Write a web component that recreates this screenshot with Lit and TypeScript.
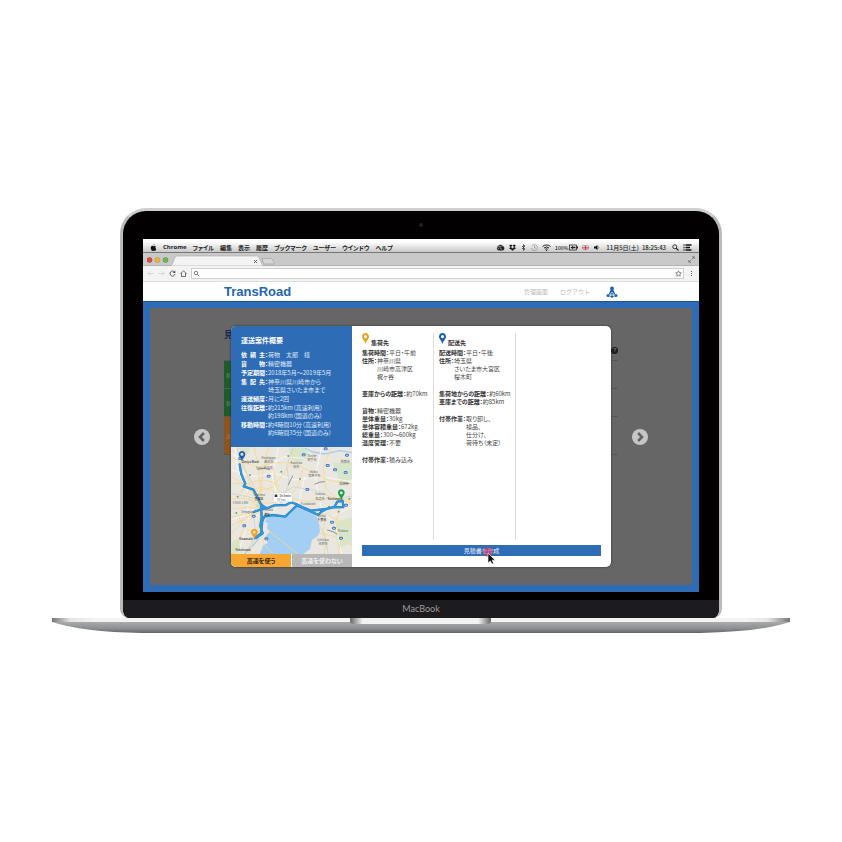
import { LitElement, html, css, svg } from "lit";
import { customElement } from "lit/decorators.js";

const pin = (color: string, x = 0, y = 0) => svg`
  <path transform="translate(${x} ${y})" fill=${color} fill-rule="evenodd"
    d="M10 0C4.500 0 0 4.500 0 10c0 7 7 11 10 21c3-10 10-14 10-21C20 4.500 15.500 0 10 0zM10 5.500a4.500 4.500 0 1 1 0 9a4.500 4.500 0 0 1 0-9z"/>`;

const arrow = (left: boolean) => html`
  <svg viewBox="0 0 16 16" aria-hidden="true">
    <circle cx="8" cy="8" r="8" fill="#c6c6c6"/>
    <path d=${left ? "M9.900 4L6 8l3.900 4" : "M6.100 4L10 8l-3.900 4"} fill="none" stroke="#636363" stroke-width="2.600"/>
  </svg>`;

const ROUTE = "M26 55L31 85l12 28-5 8 29 10 9 16 12 25 9 9 11 6 22-9 35-1 15-8 15 5 20 10 25 10 45-5 25-6 9-16 16-2 2 18-28 1"
  + "M72 276l18-14 4-37 6-13 25-5 38 5 17-17 18-17 27 12 37 17 8-9 15-8M90 174l2 41-4 25 7 22-20 14M68 198l22-8 16-4";

@customElement("route-map")
export class RouteMap extends LitElement {
  static styles = css`
    :host { display: block; height: 107px; overflow: hidden; }
    svg { display: block; width: 100%; height: 100%; }
    text { font: 9px "Noto Sans CJK JP", "Noto Sans", sans-serif; fill: #666; text-anchor: middle; }
    .city { fill: #333; font-weight: 500; }
  `;

  private places: [number, number, string, string][] = [
    [58, 50, "Omiya Ward", "city"],
    [113, 40, "Koshigaya", ""], [113, 52, "越谷市", ""],
    [243, 32, "Toride", ""], [243, 44, "取手市", ""],
    [196, 54, "Kashiwa", ""], [196, 67, "柏市", ""],
    [100, 70, "Soka 草加市", ""],
    [248, 80, "Abiko", ""], [250, 92, "我孫子市", ""],
    [343, 52, "稲敷市", ""],
    [338, 118, "成田市", ""],
    [267, 148, "Sakura", ""], [267, 161, "佐倉市", ""],
    [29, 175, "CHUO LINE", ""],
    [84, 151, "Toshima", ""], [84, 163, "豊島区", "city"],
    [50, 201, "Setagaya", ""],
    [112, 196, "Minato", ""], [108, 209, "港区", "city"],
    [232, 176, "Funabashi", ""],
    [272, 213, "Chiba", ""], [272, 226, "千葉市", "city"],
    [312, 162, "Yachimata", "city"],
    [45, 283, "Kawasaki", "city"],
    [36, 315, "Yokohama", "city"],
    [276, 284, "Ichihara", ""], [276, 297, "市原市", ""],
    [336, 258, "Mobara", ""],
  ];

  render() {
    return html`
      <svg viewBox="0 3 363 321" preserveAspectRatio="xMidYMid slice" role="img" aria-label="ルート地図">
        <rect y="3" width="363" height="321" fill="#e9e7df"/>
        <path fill="#d7e6cb" d="M172 5l50 0 15 26-34 20-24-15zM305 50l58-2v50l-36 14zM307 232l56-20v80l-42 14zM0 292l20-14 14 46H0zM20 5h40l-14 26z"/>
        <path fill="#a4cff4" d="M108 213l20-5 36 5 18-18 16-16 24 14 34 16 8 24 3 24-8 14-16 10-6 28-22 16H86l10-24-4-30 4-34z"/>
        <path fill="#e9e7df" d="M96 224l14 8-2 16 10 8-14 14 6 22-18 8-8-10 8-40z"/>
        <path fill="none" stroke="#a4cff4" stroke-width="4" d="M222 6l24 12 35 6 45-10 37 6M78 176l12 14 4 30M40 324l30-30 14-16"/>
        <g fill="none" stroke="#fff" stroke-width="2">
          <path d="M0 22l60 35 50 5 50-30 60 5M0 72l70 20 60-10 60 20 80-10 93 15M12 3l8 70 30 60 2 90-30 100M142 3l-18 90 20 80-20 30M272 3l-20 90 20 100 40 40 20 91M0 222l60-20 30 10M222 92l-20 80M362 182l-60 30"/>
        </g>
        <g fill="none" stroke="#c8cdd2" stroke-width="2">
          <path d="M17 3l20 60 28 50 17 50-14 45 6 60-30 55M187 3l-20 60 8 50-28 60M363 150l-50 10-50-24-76-14-65 40"/>
          <path d="M0 142l50 10 35 12M292 324l-12-60-20-34"/>
        </g>
        <g fill="none" stroke="#f7d98e" stroke-width="2.500">
          <path d="M0 34l42 18 42 10 46-12 60 0 50 28 55 25 68 12"/>
          <path d="M0 112l36 2 42 22 45-12 30-35 26-34 16-52"/>
          <path d="M0 159l42-2 38 14 38 0 60-14 52 10 70-12 63 16"/>
          <path d="M0 188l50-4 40 2M0 213l50-10 45-12M0 240l42-22 48-28M0 266l44-50 44-28M6 324l38-90 46-44M52 323l26-60 12-70"/>
          <path d="M32 3l8 60 16 50 32 70M70 3l12 60 6 66 2 60M112 3l-18 80-4 50 2 56M0 90l60 40 28 56"/>
          <path d="M127 62l8 62 28 32 38 18 34 18 48 12 42 20 60 30M217 65l-16 54-28 38M302 4l-26 60 8 62 30 30 49 8"/>
          <path d="M283 220l-8 40 12 30-8 34M326 186l-12 44 16 50-8 44M264 262l40 8 59 28"/>
          <path d="M48 145c10-24 66-26 85-4 10 20 2 38-18 44-26 5-56-8-67-40z"/>
          <path d="M30 142c18-46 90-50 115-18M24 214c10 30 40 52 62 42M110 252l90 72M86 256l14 40 26 28"/>
        </g>
        <g fill="none" stroke="#8b8d91" stroke-width="3" stroke-linecap="round">
          <path d="M172 116q6-14 13-26M252 114q14-8 28-7M80 70q20-6 36 0M290 252q18 4 28 12M338 112l16 0"/>
        </g>
        <g fill="#4579c8">
          ${[[28, 38], [218, 27], [284, 9], [290, 59], [113, 91], [312, 72], [229, 131], [348, 28], [303, 229], [344, 80], [330, 277], [40, 240], [309, 247], [68, 211], [106, 279], [345, 178]].map(([x, y]) => svg`<rect x=${x - 6} y=${y - 5} width="12" height="9" rx="4"/><path d="M${x - 3} ${y}h6" stroke="#fff" stroke-width="2"/>`)}
        </g>
        <g fill="#6aa375">
          ${[[57, 87], [151, 77], [172, 30], [207, 99], [323, 197], [355, 158], [16, 201], [20, 152], [294, 182]].map(([x, y]) => svg`<circle cx=${x} cy=${y} r="3"/>`)}
        </g>
        <g fill="none" stroke-linejoin="round" stroke-linecap="round">
          <path d=${ROUTE} stroke="#2b7fc0" stroke-width="7"/>
          <path d=${ROUTE} stroke="#2f97dc" stroke-width="5"/>
        </g>
        ${this.places.map(([x, y, label, cls]) => svg`<text class=${cls} x=${x} y=${y}>${label}</text>`)}
        <path fill="#fff" stroke="#c9c9c9" d="M127 140h56v27h-43l-6 7v-7h-7z"/>
        <path fill="#333" d="M131 147q4-5 8 0v6h-8z"/>
        <text class="city" x="162" y="154">1h 5min</text>
        <text x="151" y="164">57 km</text>
        ${pin("#1f60b4", 23, 15)}
        ${pin("#17a045", 321, 130)}
        ${pin("#f3a11c", 60, 248)}
      </svg>`;
  }
}

@customElement("quote-dialog")
export class QuoteDialog extends LitElement {
  static styles = css`
    :host { display: block; flex: 0 1 380px; min-width: 0; }
    * { box-sizing: border-box; margin: 0; }
    .dialog {
      display: grid; grid-template-columns: 121px 1fr; height: 100%;
      background: #fff; border-radius: 5px; overflow: hidden;
      font-size: 6px; line-height: 8px; color: #444;
      box-shadow: 0 0 2px #222;
    }
    .summary { display: flex; flex-direction: column; }
    .facts { background: #2f6cb6; color: #dfeafa; padding: 9px 0 10px 10px; }
    h2 { font-size: 7px; line-height: 10px; color: #fff; margin-bottom: 6px; }
    .facts dl { display: grid; gap: 1px; }
    .fact { display: flex; }
    .fact dt { display: flex; font-weight: 700; color: #fff; }
    .key { width: 24px; text-align: justify; text-align-last: justify; }
    .routes { display: grid; grid-template-columns: 1fr 1fr; gap: 1px; background: #fff; }
    button { border: 0; padding: 0; font: inherit; cursor: pointer; }
    .routes button { height: 13px; font-weight: 700; }
    .use { background: #f5a732; color: #33220a; }
    .avoid { background: #b7b7b7; color: #f1f1f1; }
    .detail { display: flex; flex-direction: column; padding: 7px 10px 11px; gap: 5px; min-width: 0; }
    .stops { flex: 1; display: grid; grid-template-columns: 72px 82px 1fr; }
    .stop { border-right: 1px solid #dcdcdc; white-space: nowrap; }
    .stop + .stop { padding-left: 5px; }
    h3 { display: flex; align-items: flex-end; gap: 2px; height: 14px; font-size: 6px; line-height: 8px; color: #333; margin-bottom: 2px; }
    h3 svg { width: 7px; height: 11px; margin-bottom: 3px; }
    .group { margin-bottom: 9px; }
    .group div { display: flex; }
    .group dt { font-weight: 700; color: #333; }
    .submit { position: relative; }
    .submit button { display: block; width: 100%; height: 11px; background: #2f6cb6; color: #e3ecf8; }
    .pointer { position: absolute; left: 50%; top: 1px; width: 16px; height: 18px; }
  `;

  private facts: [string, string[]][] = [
    ["依 頼 主", ["荷物　太郎　様"]],
    ["貨 物", ["精密機器"]],
    ["予定期間", ["2018年5月〜2019年5月"]],
    ["集 配 先", ["神奈川県川崎市から", "埼玉県さいたま市まで"]],
    ["運送頻度", ["月に2回"]],
    ["往復距離", ["約215km（高速利用）", "約198km（国道のみ）"]],
    ["移動時間", ["約4時間10分（高速利用）", "約6時間35分（国道のみ）"]],
  ];

  private stops: { name: string; color: string; groups: [string, string[]][][] }[] = [
    {
      name: "集荷先", color: "#f0a020",
      groups: [
        [["集荷時間", ["平日・午前"]], ["住所", ["神奈川県", "川崎市高津区", "梶ヶ谷"]]],
        [["車庫からの距離", ["約70km"]]],
        [["貨物", ["精密機器"]], ["単体重量", ["30kg"]], ["単体容積重量", ["672kg"]], ["総重量", ["300〜600kg"]], ["温度管理", ["不要"]]],
        [["付帯作業", ["積み込み"]]],
      ],
    },
    {
      name: "配送先", color: "#1d5cad",
      groups: [
        [["配送時間", ["平日・午後"]], ["住所", ["埼玉県", "さいたま市大宮区", "桜木町"]]],
        [["集荷地からの距離", ["約60km"]], ["車庫までの距離", ["約85km"]]],
        [["付帯作業", ["取り卸し、", "検品、", "仕分け、", "荷待ち（未定）"]]],
      ],
    },
  ];

  render() {
    return html`
      <section class="dialog" role="dialog" aria-labelledby="title">
        <div class="summary">
          <div class="facts">
            <h2 id="title">運送案件概要</h2>
            <dl>${this.facts.map(([key, lines]) => html`
              <div class="fact">
                <dt><span class="key">${key}</span>：</dt>
                <dd>${lines.map((l) => html`<p>${l}</p>`)}</dd>
              </div>`)}
            </dl>
          </div>
          <route-map></route-map>
          <div class="routes">
            <button class="use">高速を使う</button>
            <button class="avoid">高速を使わない</button>
          </div>
        </div>
        <div class="detail">
          <div class="stops">
            ${this.stops.map((s) => html`
              <div class="stop">
                <h3><svg viewBox="0 0 20 31" aria-hidden="true">${pin(s.color)}</svg>${s.name}</h3>
                ${s.groups.map((g) => html`
                  <dl class="group">${g.map(([key, lines]) => html`
                    <div><dt>${key}：</dt><dd>${lines.map((l) => html`<p>${l}</p>`)}</dd></div>`)}
                  </dl>`)}
              </div>`)}
          </div>
          <div class="submit">
            <button>見積書を作成</button>
            <svg class="pointer" viewBox="0 0 16 18" aria-hidden="true">
              <circle cx="6" cy="6" r="5" fill="#d63a6a" opacity=".6"/>
              <path d="M6 7v10l2.300-2 1.700 3 1.600-.8-1.500-3h3z" fill="#111" stroke="#fff" stroke-width=".6"/>
            </svg>
          </div>
        </div>
      </section>`;
  }
}

@customElement("mac-screen")
export class MacScreen extends LitElement {
  static styles = css`
    :host { display: block; background: #fff; overflow: hidden; }
    * { box-sizing: border-box; margin: 0; }
    svg { display: block; flex: none; }
    button { display: block; border: 0; padding: 0; background: none; cursor: pointer; }
    a { color: inherit; text-decoration: none; }
    .menubar {
      display: flex; justify-content: space-between; align-items: flex-end; height: 14px; padding: 0 7px;
      background: linear-gradient(#fff 20%, #c9c9c9); border-bottom: 1px solid #777;
      font-size: 6px; line-height: 9px; color: #222; white-space: nowrap; font-weight: 500;
    }
    .menus, .status { display: flex; align-items: center; }
    .menus { gap: 6px; font-weight: 700; }
    .status { gap: 4px; }
    .app { font-family: "Open Sans", sans-serif; }
    .i7 { width: 7px; height: 7px; }
    .i9 { width: 9px; height: 7px; }
    .battery { display: flex; align-items: center; gap: 1px; font-size: 5px; }
    .clock { display: flex; gap: 3px; margin: 0 2px; }
    .tabs { display: flex; align-items: center; height: 13px; padding: 0 4px; background: #c9c9c9; border-bottom: 1px solid #b2b2b2; }
    .lights { width: 23px; height: 7px; }
    .tab { width: 106px; height: 11px; margin: 2px auto -1px 0; z-index: 1; }
    .toolbar { display: flex; align-items: center; gap: 4px; height: 15px; padding: 0 4px; background: #f3f3f3; }
    .address { flex: 1; display: flex; align-items: center; height: 11px; background: #fff; border: 1px solid #cfcfcf; padding: 0 1px; min-width: 0; }
    .address input { flex: 1; min-width: 0; height: 8px; border: 0; padding: 0 2px; background: none; outline: none; font-size: 6px; }
    .site { display: flex; align-items: center; height: 21px; padding: 0 81px; background: #fff; border-top: 1px solid #ddd; border-bottom: 1px solid #1a5498; }
    .brand { font: 700 13px/18px "Liberation Sans", sans-serif; color: #2464b3; margin-right: auto; }
    .site nav { display: flex; gap: 12px; margin-right: 16px; font-size: 6px; color: #bbb; font-feature-settings: normal; }
    .user { width: 12px; height: 12px; }
    .frame { background: #2f6cb6; padding: 6px 7px 7px; }
    .stage { display: grid; background: #666; }
    .behind, .overlay { grid-area: 1 / 1; }
    .behind { width: 394px; max-width: 100%; margin: 0 auto; padding-top: 21px; }
    .behind h1 { font-size: 9px; line-height: 12px; color: #142c4c; }
    .help { display: block; margin: 6px 0 6px auto; width: 7px; height: 7px; border-radius: 4px; background: #1b1b1b; color: #777; font: 700 6px/7px "Liberation Sans", sans-serif; text-align: center; }
    .rows { border-top: 1px solid #575757; }
    .row { height: 28px; border-bottom: 1px solid #575757; display: flex; color: #718873; font-size: 5px; line-height: 28px; }
    .row span { width: 60px; padding-left: 2px; background: #205c2a; }
    .row.alt { height: 38px; line-height: 38px; color: #9b7c5a; }
    .row.alt span { background: #8b5520; }
    .overlay { display: flex; justify-content: center; align-items: center; gap: 21px; padding: 18px 0; min-width: 0; }
    .overlay button { width: 16px; height: 16px; margin-bottom: 19px; flex: none; }
  `;

  render() {
    return html`
      <div class="menubar">
        <div class="menus">
          <svg class="i7" viewBox="0 0 14 14"><path fill="#111" d="M9 0q0 3-2.500 3Q6.500 1 9 0zM3 4q2-.8 4 .3 2.500-1.300 5 .7-3 2 .5 5.500Q11 14 9 14l-2-.7-2 .7Q2.500 13.500 1.500 9 1.300 5 3 4z"/></svg>
          <span class="app">Chrome</span><span>ファイル</span><span>編集</span><span>表示</span><span>履歴</span><span>ブックマーク</span><span>ユーザー</span><span>ウインドウ</span><span>ヘルプ</span>
        </div>
        <div class="status">
          <svg class="i9" viewBox="0 0 18 14"><path fill="#222" d="M5 13a5 5 0 0 1-1-9 6 6 0 0 1 10 0 5 5 0 0 1 0 9z"/><path d="M6 10a3 3 0 1 1 3-4M12 10a3 3 0 1 1 1-5" fill="none" stroke="#bbb" stroke-width="1.300"/></svg>
          <svg class="i7" viewBox="0 0 14 14"><path fill="#111" d="M4 1l3 2.500L3.500 6 0 3.500zM10 1l4 2.500L10.500 6 7 3.500zM3.500 6L7 8.500 4 11 0 8.500zM10.500 6L14 8.500 10 11 7 8.500zM4 11.500l3-2.300 3 2.300-3 2z"/></svg>
          <svg class="i7" viewBox="0 0 14 14"><path d="M4 4l6 6-3 3V1l3 3-6 6" fill="none" stroke="#333" stroke-width="1.500"/></svg>
          <svg class="i7" viewBox="0 0 14 14"><path d="M2 4a6 6 0 1 1-1 4M7 4v4h3" fill="none" stroke="#888" stroke-width="1.300"/></svg>
          <svg class="i9" viewBox="0 0 18 14"><path d="M1 5a12 12 0 0 1 16 0M4 8a8 8 0 0 1 10 0M6.500 10.500a4 4 0 0 1 5 0" fill="none" stroke="#222" stroke-width="2"/><circle cx="9" cy="13" r="1.300" fill="#222"/></svg>
          <span class="battery">100%<svg class="i9" viewBox="0 0 18 14"><rect x="1" y="2" width="14" height="10" fill="none" stroke="#222" stroke-width="1.500"/><path fill="#222" d="M15 5h3v4h-3zM3 7l5-3.500v2h5v3H8v2z"/></svg></span>
          <svg class="i7" viewBox="0 0 14 14"><path fill="#5a6aa6" d="M0 3h14v9H0z"/><path d="M0 3l14 9M14 3L0 12" stroke="#eee" stroke-width="2"/><path d="M7 3v9M0 7.500h14" stroke="#fff" stroke-width="4"/><path d="M7 3v9M0 7.500h14" stroke="#d3403c" stroke-width="2.500"/></svg>
          <svg class="i7" viewBox="0 0 14 14"><path fill="#111" d="M2 5h3l4-3v10L5 9H2z"/><path d="M11 5q1.500 2 0 4" fill="none" stroke="#333"/></svg>
          <span class="clock"><span>11月5日(土)</span><span>18:25:43</span></span>
          <svg class="i7" viewBox="0 0 14 14"><circle cx="5.500" cy="5.500" r="4" fill="none" stroke="#222" stroke-width="1.800"/><path d="M8.500 8.500L13 13" stroke="#222" stroke-width="2.200"/></svg>
          <svg class="i9" viewBox="0 0 18 14"><path d="M1 2h2M1 7h2M1 12h2M5 2h12M5 7h9M5 12h12" stroke="#111" stroke-width="2.600"/></svg>
        </div>
      </div>
      <div class="tabs">
        <svg class="lights" viewBox="0 0 46 14">
          <circle cx="5" cy="8" r="5" fill="#df4a42" stroke="#a33"/><circle cx="21" cy="8" r="5" fill="#efb63c" stroke="#b8832a"/><circle cx="37" cy="8" r="5" fill="#6cba4c" stroke="#4a8a34"/>
        </svg>
        <svg class="tab" viewBox="0 0 106 11">
          <path d="M0 11q1.500 0 2-1.500L5 2.500Q5.500 1 7 1h80q1.500 0 2 1.500l3 7Q92.500 11 94 11z" fill="#f3f3f3" stroke="#aaa" stroke-width=".6"/>
          <path d="M84 5l3 3m0-3l-3 3" stroke="#444" stroke-width=".8"/>
          <path d="M92 3.500h9q1 0 1.500 1l1.500 3q.5 1.500-1 1.500h-8q-1 0-1.500-1z" fill="#d6d6d6" stroke="#999" stroke-width=".6"/>
        </svg>
        <svg class="i7" viewBox="0 0 14 14"><path d="M7.500 6.500L12 2M8 1.500h4.500V6M6.500 7.500L2 12M1.500 8v4.500H6" fill="none" stroke="#666" stroke-width="1.400"/></svg>
      </div>
      <div class="toolbar">
        <button aria-label="戻る"><svg class="i7" viewBox="0 0 14 14"><path d="M13 7H2M6.500 2.500L2 7l4.500 4.500" fill="none" stroke="#ccc" stroke-width="1.500"/></svg></button>
        <button aria-label="進む"><svg class="i7" viewBox="0 0 14 14"><path d="M1 7h11M7.500 2.500L12 7l-4.500 4.500" fill="none" stroke="#ccc" stroke-width="1.500"/></svg></button>
        <button aria-label="再読み込み"><svg class="i7" viewBox="0 0 14 14"><path d="M11 4a5 5 0 1 0 1 4" fill="none" stroke="#444" stroke-width="1.700"/><path d="M12.500 1v5h-5z" fill="#444"/></svg></button>
        <button aria-label="ホーム"><svg class="i7" viewBox="0 0 14 14"><path d="M1 7.500L7 1.500l6 6M3 6v7h8V6" fill="none" stroke="#444" stroke-width="1.500"/></svg></button>
        <div class="address">
          <svg class="i7" viewBox="0 0 14 14"><circle cx="6" cy="6" r="3.500" fill="none" stroke="#555" stroke-width="1.500"/><path d="M8.500 8.500L12.500 12.500" stroke="#555" stroke-width="1.700"/></svg>
          <input aria-label="アドレス" type="text">
          <svg class="i7" viewBox="0 0 14 14"><path d="M7 1.500l1.700 3.700 4 .5-3 2.700.8 4L7 10.500l-3.500 1.900.8-4-3-2.700 4-.5z" fill="none" stroke="#444" stroke-width="1.200"/></svg>
        </div>
        <button aria-label="メニュー"><svg class="i7" viewBox="0 0 14 14"><path d="M7 2v2M7 6v2M7 10v2" stroke="#555" stroke-width="2"/></svg></button>
      </div>
      <header class="site">
        <a class="brand" href="#">TransRoad</a>
        <nav><a href="#">管理画面</a><a href="#">ログアウト</a></nav>
        <svg class="user" viewBox="0 0 24 24" aria-hidden="true"><g fill="#2464b3"><circle cx="12" cy="5" r="4"/><path d="M9 8h6l4 9H5z"/><circle cx="4" cy="19" r="3"/><circle cx="20" cy="19" r="3"/><circle cx="12" cy="21" r="2.500"/></g><path d="M9 15.500l3-3 3 3" stroke="#fff" stroke-width="1.500" fill="none"/><path d="M4 19q8 6 16 0" stroke="#2464b3" stroke-width="1.500" fill="none"/></svg>
      </header>
      <div class="frame">
        <main class="stage">
          <div class="behind">
            <h1>見</h1>
            <span class="help">?</span>
            <div class="rows">
              <div class="row"><span>新</span></div>
              <div class="row"><span>新</span></div>
              <div class="row alt"><span>返</span></div>
            </div>
          </div>
          <div class="overlay">
            <button aria-label="前へ">${arrow(true)}</button>
            <quote-dialog></quote-dialog>
            <button aria-label="次へ">${arrow(false)}</button>
          </div>
        </main>
      </div>`;
  }
}

@customElement("app-root")
export class AppRoot extends LitElement {
  static styles = css`
    :host {
      display: flex; flex-direction: column; justify-content: center; min-height: 100vh;
      box-sizing: border-box; padding: 0 52px; background: #fff;
      font-family: "Noto Sans CJK JP", sans-serif; font-feature-settings: "palt";
    }
    .lid {
      margin: 0 68px; background: #020001; border: 3px solid #b9babb; border-top-color: #cfcfcf; border-bottom: 0;
      border-radius: 26px 26px 9px 9px; overflow: hidden;
    }
    .camera { display: flex; justify-content: center; align-items: center; height: 28px; }
    .lens { width: 4px; height: 4px; border-radius: 2px; background: #1b2226; }
    mac-screen { margin: 0 20px 8px; }
    .chin { height: 18px; background: #1c1c1e; color: #a39a96; text-align: center; font: 9px/18px Lato, sans-serif; }
    .base { display: block; width: 100%; height: 16px; }
  `;

  render() {
    return html`
      <div class="lid">
        <div class="camera"><span class="lens"></span></div>
        <mac-screen></mac-screen>
        <div class="chin">MacBook</div>
      </div>
      <svg class="base" viewBox="0 0 738 16" preserveAspectRatio="none" aria-hidden="true">
        <defs>
          <linearGradient id="belly" x2="0" y2="1"><stop offset="0" stop-color="#a8abac"/><stop offset=".6" stop-color="#8c8e8f"/><stop offset="1" stop-color="#626364"/></linearGradient>
          <linearGradient id="deck"><stop offset="0" stop-color="#777"/><stop offset=".025" stop-color="#e4e4e4"/><stop offset=".06" stop-color="#f3f3f3"/><stop offset=".94" stop-color="#f3f3f3"/><stop offset=".97" stop-color="#e4e4e4"/><stop offset="1" stop-color="#777"/></linearGradient>
          <linearGradient id="notch"><stop offset="0" stop-color="#666"/><stop offset=".09" stop-color="#f2f2f2"/><stop offset=".91" stop-color="#f2f2f2"/><stop offset="1" stop-color="#666"/></linearGradient>
        </defs>
        <path d="M0 4Q30 14 90 15H648Q708 14 738 4z" fill="url(#belly)"/>
        <path d="M0 0H738V4H0z" fill="url(#deck)"/>
        <path d="M298 0h141v3q0 3-4 3H302q-4 0-4-3z" fill="url(#notch)"/>
      </svg>`;
  }
}
